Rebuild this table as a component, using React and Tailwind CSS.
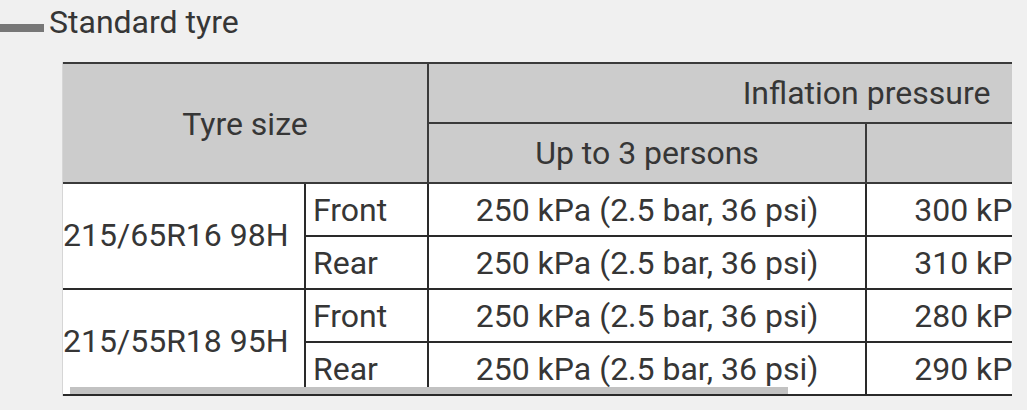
const ROWS = [
  {
    size: '215/65R16 98H',
    items: [
      { pos: 'Front', a: '250 kPa (2.5 bar, 36 psi)', b: '300 kPa (3.0 bar, 44 psi)' },
      { pos: 'Rear', a: '250 kPa (2.5 bar, 36 psi)', b: '310 kPa (3.1 bar, 45 psi)' },
    ],
  },
  {
    size: '215/55R18 95H',
    items: [
      { pos: 'Front', a: '250 kPa (2.5 bar, 36 psi)', b: '280 kPa (2.8 bar, 41 psi)' },
      { pos: 'Rear', a: '250 kPa (2.5 bar, 36 psi)', b: '290 kPa (2.9 bar, 42 psi)' },
    ],
  },
];

export default function App() {
  return (
    <div
      className="w-[1027px] h-[410px] bg-[#f0f0f0] text-[#363636] overflow-hidden"
      style={{ fontFamily: 'Roboto, "Noto Sans", sans-serif' }}
    >
      <div className="flex items-start pt-[4px]">
        <div className="w-[44px] h-[8px] mt-[20px] bg-[#777] shrink-0" />
        <h2 className="ml-[5px] text-[32px] leading-[36px] font-normal">Standard tyre</h2>
      </div>

      <div className="mt-[22px] ml-[62px] w-[950px] relative overflow-hidden border-l border-[#d6d6d6]">
        <table className="border-collapse table-fixed w-[1241px] text-[32px] leading-none">
          <colgroup>
            <col className="w-[242px]" />
            <col className="w-[123px]" />
            <col className="w-[438px]" />
            <col className="w-[438px]" />
          </colgroup>
          <thead>
            <tr className="h-[60px] bg-[#cccccc]">
              <th
                colSpan={2}
                rowSpan={2}
                className="font-normal text-center border-t-2 border-b-2 border-r-2 border-[#3a3a3a] pt-[2px]"
              >
                Tyre size
              </th>
              <th colSpan={2} className="font-normal text-center border-t-2 border-b-2 border-[#3a3a3a]">
                Inflation pressure
              </th>
            </tr>
            <tr className="h-[60px] bg-[#cccccc]">
              <th className="font-normal text-center border-b-2 border-r-2 border-[#3a3a3a]">Up to 3 persons</th>
              <th className="font-normal text-center border-b-2 border-[#3a3a3a]">Full load</th>
            </tr>
          </thead>
          <tbody className="bg-white">
            {ROWS.map((row) =>
              row.items.map((it, i) => (
                <tr key={row.size + it.pos} className="h-[53px]">
                  {i === 0 && (
                    <td rowSpan={2} className="pl-0 pb-[2px] border-b-2 border-r-2 border-[#2a2a2a] whitespace-nowrap">
                      {row.size}
                    </td>
                  )}
                  <td className="pl-[7px] border-b-2 border-r-2 border-[#2a2a2a]">{it.pos}</td>
                  <td className="text-center border-b-2 border-r-2 border-[#2a2a2a] whitespace-nowrap">{it.a}</td>
                  <td className="text-center border-b-2 border-[#2a2a2a] whitespace-nowrap">{it.b}</td>
                </tr>
              ))
            )}
          </tbody>
        </table>
        <div className="absolute left-[7px] bottom-[2px] w-[718px] h-[7px] bg-[#c2c2c2]" />
      </div>
    </div>
  );
}
